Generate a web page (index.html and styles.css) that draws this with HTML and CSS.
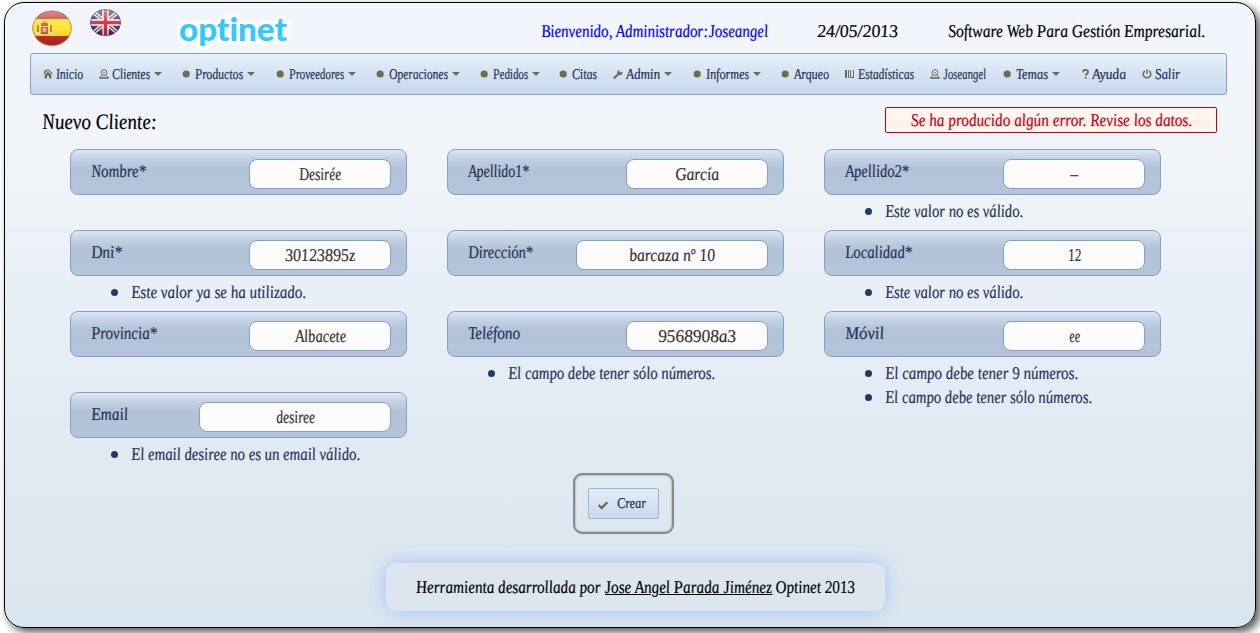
FILE: index.html
```html
<!DOCTYPE html>
<html lang="es">
<head>
<meta charset="utf-8">
<title>Optinet - Nuevo Cliente</title>
<link rel="stylesheet" href="styles.css">
</head>
<body>
<svg class="defs" aria-hidden="true">
  <defs>
    <linearGradient id="gloss" x1="0" y1="0" x2="0" y2="1"><stop offset="0" stop-color="#fff" stop-opacity=".5"/><stop offset=".5" stop-color="#fff" stop-opacity=".12"/><stop offset="1" stop-color="#400" stop-opacity=".18"/></linearGradient>
    <clipPath id="es"><ellipse cx="20" cy="18" rx="19.5" ry="17.2"/></clipPath>
    <clipPath id="uk"><ellipse cx="15.5" cy="13.5" rx="15.3" ry="13.3"/></clipPath>
    <symbol id="home" viewBox="0 0 10 10"><path d="M5 .7.6 5M5 .7 9.4 5M2 .8v2.5" fill="none" stroke="currentColor" stroke-width="1.1"/><path d="M5 2.7 8.4 6v3.5H6V6.7H4v2.8H1.6V6z"/></symbol>
    <symbol id="user" viewBox="0 0 10 10"><circle cx="5" cy="3.5" r="2.8" fill="none" stroke="currentColor"/><path d="M3.3 5.9.7 8.7h8.6L6.7 5.9M.2 9.2h9.6" fill="none" stroke="currentColor"/><circle cx="5" cy="3.5" r=".8"/></symbol>
    <symbol id="dot" viewBox="0 0 10 10"><circle cx="4.2" cy="5" r="3.6"/></symbol>
    <symbol id="wrench" viewBox="0 0 10 10"><path d="M.3 8.2 4.1 5C3.5 3 4.7.9 7.2.8L6 2.6l1.2 1 2.4-1.1C10 4.8 8 6.7 5.8 6.2L2 9.7C.7 9.7.2 9 .3 8.2z"/></symbol>
    <symbol id="book" viewBox="0 0 10 10"><path d="M0 1h2v8H0zM3 1h1v8H3zM5 1h1v7h2V7h1v2H5zM8 1h1v6H8z"/></symbol>
    <symbol id="help" viewBox="1 0 7 10"><path d="M2 3.4C2.1 0 7 .1 7 3c0 2-2.3 1.9-2.3 3.8" fill="none" stroke="currentColor" stroke-width="1.8"/><path d="M3.7 7.9h1.9v1.7H3.7z"/></symbol>
    <symbol id="power" viewBox="0 0 10 10"><path d="M2.8 1.9a3.8 3.8 0 1 0 4.4 0M5 .3v4.6" fill="none" stroke="currentColor" stroke-width="1.5"/></symbol>
    <symbol id="check" viewBox="0 0 11 10"><path d="M1.2 5 4.2 8 9.8 2.2" fill="none" stroke="currentColor" stroke-width="2.3"/></symbol>
  </defs>
</svg>
<div class="page">
  <header class="header">
    <svg class="flag-es" width="40" height="37" viewBox="0 0 40 37">
      <ellipse cx="20" cy="19.4" rx="19" ry="17" fill="#777" opacity=".5"/>
      <g clip-path="url(#es)"><path fill="#bd2018" d="M0 0h40v36H0z"/><path fill="#ffe01b" d="M0 9h40v17H0z"/>
      <path fill="#b9473a" d="M9 13h7v3H9zM9 17h7v7H9z"/><path fill="#e9a191" d="M10.5 18h4v4h-4z"/><path fill="#a9764c" d="M5 15h2v9H5zM18 15h2v9h-2z"/><path fill="#ddd" d="M4 22h4v2H4zM17 22h4v2h-4z"/><path fill="#d49020" d="M11 11h3v2h-3z"/>
      <path fill="url(#gloss)" d="M0 0h40v36H0z"/></g><ellipse cx="20" cy="18" rx="19.2" ry="16.9" fill="none" stroke="#8e4b2a" stroke-opacity=".35"/>
    </svg>
    <svg class="flag-uk" width="31" height="27" viewBox="0 0 31 27">
      <g clip-path="url(#uk)"><path fill="#1d2f78" d="M0 0h31v27H0z"/><path d="M0 0 31 27M31 0 0 27" stroke="#fff" stroke-width="4"/><path d="M0 0 31 27M31 0 0 27" stroke="#cc2233" stroke-width="1.4"/><path d="M15.5 0v27M0 13.5h31" stroke="#fff" stroke-width="6.4"/><path d="M15.5 0v27M0 13.5h31" stroke="#cf1f35" stroke-width="3.6"/><path fill="url(#gloss)" d="M0 0h31v27H0z"/></g>
      <ellipse cx="15.5" cy="13.5" rx="15" ry="13" fill="none" stroke="#445" stroke-opacity=".4"/>
    </svg>
    <div class="logo"><span class="fit" data-w="108">optinet</span></div>
    <div class="welcome"><span class="fit" data-w="227">Bienvenido, Administrador:Joseangel</span></div>
    <div class="date"><span class="fit" data-w="81">24/05/2013</span></div>
    <div class="slogan"><span class="fit" data-w="257">Software Web Para Gestión Empresarial.</span></div>
  </header>
  <nav class="menu">
    <a><svg><use href="#home"/></svg><span class="fit" data-w="27">Inicio</span></a>
    <a><svg><use href="#user"/></svg><span class="fit" data-w="38">Clientes</span><i></i></a>
    <a><svg><use href="#dot"/></svg><span class="fit" data-w="48">Productos</span><i></i></a>
    <a><svg><use href="#dot"/></svg><span class="fit" data-w="55">Proveedores</span><i></i></a>
    <a><svg><use href="#dot"/></svg><span class="fit" data-w="59">Operaciones</span><i></i></a>
    <a><svg><use href="#dot"/></svg><span class="fit" data-w="35">Pedidos</span><i></i></a>
    <a><svg><use href="#dot"/></svg><span class="fit" data-w="25">Citas</span></a>
    <a><svg><use href="#wrench"/></svg><span class="fit" data-w="34">Admin</span><i></i></a>
    <a><svg><use href="#dot"/></svg><span class="fit" data-w="43">Informes</span><i></i></a>
    <a><svg><use href="#dot"/></svg><span class="fit" data-w="35">Arqueo</span></a>
    <a><svg><use href="#book"/></svg><span class="fit" data-w="56">Estadísticas</span></a>
    <a><svg><use href="#user"/></svg><span class="fit" data-w="43">Joseangel</span></a>
    <a><svg><use href="#dot"/></svg><span class="fit" data-w="32">Temas</span><i></i></a>
    <a><svg class="narrow"><use href="#help"/></svg><span class="fit" data-w="34">Ayuda</span></a>
    <a><svg><use href="#power"/></svg><span class="fit" data-w="25">Salir</span></a>
  </nav>
  <div class="heading">
    <h1><span class="fit" data-w="115">Nuevo Cliente:</span></h1>
    <div class="error"><span class="fit" data-w="281">Se ha producido algún error. Revise los datos.</span></div>
  </div>
  <form class="form">
    <div class="cell"><div class="field"><label class="fit" data-w="55">Nombre*</label><div class="input"><span class="fit" data-w="42">Desirée</span></div></div></div>
    <div class="cell"><div class="field"><label class="fit" data-w="61">Apellido1*</label><div class="input"><span class="fit" data-w="44">García</span></div></div></div>
    <div class="cell"><div class="field"><label class="fit" data-w="64">Apellido2*</label><div class="input"><span class="fit" data-w="8">–</span></div></div><ul><li><span class="fit" data-w="138">Este valor no es válido.</span></li></ul></div>
    <div class="cell"><div class="field"><label class="fit" data-w="31">Dni*</label><div class="input"><span class="fit" data-w="70">30123895z</span></div></div><ul><li><span class="fit" data-w="175">Este valor ya se ha utilizado.</span></li></ul></div>
    <div class="cell"><div class="field"><label class="fit" data-w="65">Dirección*</label><div class="input wide"><span class="fit" data-w="86">barcaza nº 10</span></div></div></div>
    <div class="cell"><div class="field"><label class="fit" data-w="67">Localidad*</label><div class="input"><span class="fit" data-w="13">12</span></div></div><ul><li><span class="fit" data-w="138">Este valor no es válido.</span></li></ul></div>
    <div class="cell"><div class="field"><label class="fit" data-w="66">Provincia*</label><div class="input"><span class="fit" data-w="51">Albacete</span></div></div></div>
    <div class="cell"><div class="field"><label class="fit" data-w="52">Teléfono</label><div class="input"><span class="fit" data-w="78">9568908a3</span></div></div><ul><li><span class="fit" data-w="207">El campo debe tener sólo números.</span></li></ul></div>
    <div class="cell"><div class="field"><label class="fit" data-w="39">Móvil</label><div class="input"><span class="fit" data-w="11">ee</span></div></div><ul><li><span class="fit" data-w="193">El campo debe tener 9 números.</span></li><li><span class="fit" data-w="207">El campo debe tener sólo números.</span></li></ul></div>
    <div class="cell"><div class="field"><label class="fit" data-w="37">Email</label><div class="input wide"><span class="fit" data-w="39">desiree</span></div></div><ul><li><span class="fit" data-w="229">El email desiree no es un email válido.</span></li></ul></div>
  </form>
  <div class="actions"><div class="create"><svg><use href="#check"/></svg><span class="fit" data-w="29">Crear</span></div></div>
  <footer class="footer"><span class="fit" data-w="439">Herramienta desarrollada por <u>Jose Angel Parada Jiménez</u> Optinet 2013</span></footer>
</div>
<script src="fit.js"></script>
</body>
</html>
```
FILE: styles.css
```css
* { box-sizing: border-box; }
body {
  margin: 0;
  height: 633px;
  overflow: hidden;
  background: #fff;
  padding: 2px 4px 5px;
  color: #000;
  font: italic 18px "Liberation Serif", serif;
  -webkit-text-stroke: .2px currentColor;
}
.defs { position: absolute; width: 0; height: 0; }
.fit { display: inline-block; white-space: nowrap; transform-origin: 0 50%; }
.page {
  height: 626px;
  padding: 0 25px;
  border: 1px solid #000;
  border-radius: 20px;
  background: linear-gradient(#f2f5fb 0, #f1f5fa 22%, #edf3f7 34%, #ebf0f9 38%, #e6eef6 53%, #dde7f0 85%, #dae6ef 100%);
  box-shadow: 4px 4px 8px #555;
}
.header { display: flex; height: 50px; align-items: flex-start; line-height: 24px; }
.flag-es { margin: 7px 0 0 2px; }
.flag-uk { margin: 6px 0 0 18px; }
.logo {
  width: 108px;
  margin: 8px 0 0 58px;
  color: #33c8ff;
  font: 900 32px/36px Lato, sans-serif;
  font-variant-ligatures: none;
  -webkit-text-stroke: 7px #fff;
  stroke-linejoin: round;
  paint-order: stroke fill;
}
.welcome { width: 227px; margin: 16px 0 0 254px; color: #00f; }
.date { width: 81px; margin: 16px 0 0 49px; }
.slogan { margin: 16px 0 0 50px; }
.menu {
  display: grid;
  grid-template-columns: 56px 83px 94px 100px 104px 79px 54px 80px 88px 64px 85px 73px 79px 60px 60px;
  width: 1197px;
  height: 42px;
  padding-left: 12px;
  align-items: center;
  border: 1px solid #85a0c4;
  border-radius: 3px;
  background: linear-gradient(#e6f0fa, #c6d6ec);
  color: #1d3150;
  font-size: 15px;
}
.menu a { display: flex; align-items: center; height: 40px; }
.menu svg { flex: none; width: 10px; height: 10px; margin-right: 3px; color: #6b6d50; fill: currentColor; }
.menu svg.narrow { width: 7px; }
.menu i { margin-left: 4px; border: 4px solid transparent; border-top-color: #6b6d50; border-bottom: 0; }
.heading { display: flex; justify-content: space-between; height: 54px; padding: 12px 13px 0 12px; }
h1 { margin: 2px 0 0; font-size: 22px; font-weight: 400; line-height: 26px; }
.error {
  width: 332px;
  height: 26px;
  border: 1px solid #c00;
  border-radius: 2px;
  background: linear-gradient(#fff5f1 50%, #ffeee7 51%, #fff6f1);
  color: #c4000f;
  line-height: 25px;
  text-align: center;
}
.form {
  display: grid;
  grid-template-columns: repeat(3, 337px);
  grid-auto-rows: 81px;
  column-gap: 40px;
  padding-left: 40px;
  color: #1f3356;
}
.field {
  display: flex;
  justify-content: space-between;
  height: 46px;
  padding: 9px 15px 0 20px;
  border: 1px solid #86a0c5;
  border-radius: 8px;
  background: linear-gradient(#dce7f6, #c3d1e4 20%, #b2c3d8 42%, #b4c4dc);
}
.field label { height: 24px; line-height: 24px; }
.input {
  width: 142px;
  height: 30px;
  border: 1px solid #86a0c5;
  border-radius: 8px;
  background: #fbfbfb;
  color: #333;
  line-height: 28px;
  text-align: center;
}
.input.wide { width: 192px; }
ul { margin: 4px 0 0; padding: 0 0 0 41px; list-style: none; line-height: 24px; }
li { display: flex; align-items: center; height: 24px; }
li::before { content: ""; width: 7px; height: 7px; margin-right: 13px; border-radius: 50%; background: #1f3b63; }
.actions {
  width: 101px;
  height: 61px;
  margin: 0 0 0 543px;
  padding: 13px;
  border: 2px solid #87898c;
  border-radius: 9px;
  box-shadow: inset 0 0 2px #777;
}
.create {
  display: flex;
  align-items: center;
  width: 71px;
  height: 31px;
  padding-left: 8px;
  border: 1px solid #9cb5d9;
  border-radius: 2px;
  background: linear-gradient(#e3eefa, #c9d8ee);
  color: #1f2c45;
  font-size: 15px;
}
.create svg { width: 12px; height: 10px; margin: 3px 8px 0 0; color: #66694d; }
.footer {
  width: 499px;
  height: 48px;
  margin: 29px 0 0 356px;
  border-radius: 10px;
  background: #dbe6ef;
  box-shadow: 0 0 18px #a6c1f8;
  line-height: 49px;
  text-align: center;
}
```
FILE: fit.js
```js
// Condense each label to its assigned width and soften the italic slant.
document.querySelectorAll('.fit').forEach(function (el) {
  var target = Number(el.dataset.w);
  var natural = el.getBoundingClientRect().width;
  var skew = el.parentElement.className === 'logo' ? '' : 'skewX(6deg) ';
  el.style.transform = skew + 'scaleX(' + target / natural + ')';
  el.style.marginRight = (target - natural) + 'px';
});
```
